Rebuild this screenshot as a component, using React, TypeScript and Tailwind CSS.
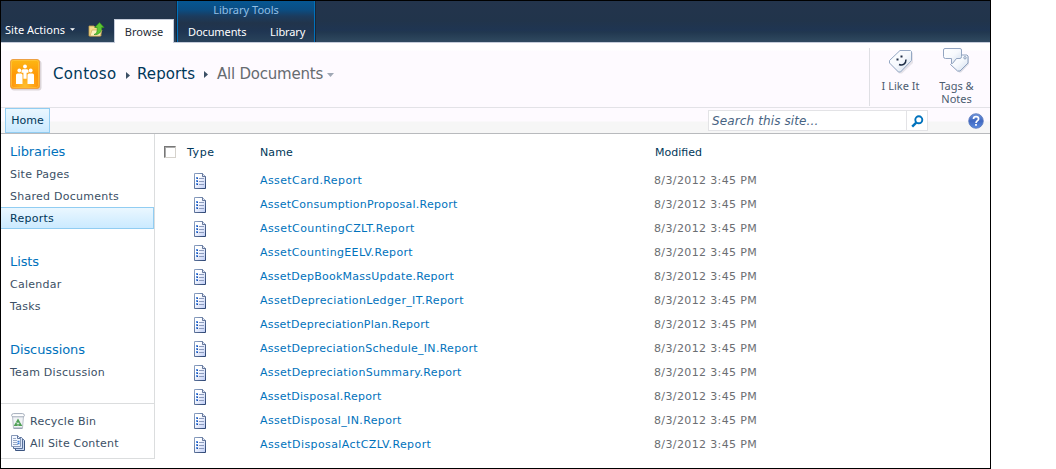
import React from "react";

const reports = [
  { name: "AssetCard.Report", tracking: "tracking-[0.4px]" },
  { name: "AssetConsumptionProposal.Report", tracking: "tracking-[0.26px]" },
  { name: "AssetCountingCZLT.Report", tracking: "tracking-[0.41px]" },
  { name: "AssetCountingEELV.Report", tracking: "tracking-[0.35px]" },
  { name: "AssetDepBookMassUpdate.Report", tracking: "tracking-[0.24px]" },
  { name: "AssetDepreciationLedger_IT.Report", tracking: "tracking-[0.35px]" },
  { name: "AssetDepreciationPlan.Report", tracking: "tracking-[0.21px]" },
  { name: "AssetDepreciationSchedule_IN.Report", tracking: "tracking-[0.29px]" },
  { name: "AssetDepreciationSummary.Report", tracking: "tracking-[0.32px]" },
  { name: "AssetDisposal.Report", tracking: "tracking-[0.25px]" },
  { name: "AssetDisposal_IN.Report", tracking: "tracking-[0.36px]" },
  { name: "AssetDisposalActCZLV.Report", tracking: "tracking-[0.4px]" },
];

const groups = [
  { title: "Libraries", items: ["Site Pages", "Shared Documents", "Reports"] },
  { title: "Lists", items: ["Calendar", "Tasks"] },
  { title: "Discussions", items: ["Team Discussion"] },
];

function ReportIcon() {
  return (
    <svg width="12" height="16" viewBox="0 0 12 16" className="block">
      <defs>
        <linearGradient id="sheet" x1="0" y1="0" x2="1" y2="1">
          <stop offset="0.3" stopColor="#fff" />
          <stop offset="1" stopColor="#bccbf5" />
        </linearGradient>
        <linearGradient id="sheetEdge" x1="0" y1="0" x2="1" y2="1">
          <stop offset="0" stopColor="#8fa3c4" />
          <stop offset="1" stopColor="#2c4472" />
        </linearGradient>
      </defs>
      <path d="M.5.5H8.5L11.5 3.5V15.5H.5Z" fill="url(#sheet)" stroke="url(#sheetEdge)" />
      <path d="M8.500.5V3.500H11.500" fill="#dfe7f8" stroke="#465b84" strokeWidth=".8" />
      <path d="M5 5.500h5M5 8.500h5M5 11.500h5" stroke="#8c9bbd" />
      <path d="M2 5h2M2 8h2M2 11h2" stroke="#5b93e6" strokeWidth="2" />
      <path d="M3 5.500h1M3 8.500h1M3 11.500h1" stroke="#1f4aa0" />
    </svg>
  );
}

function FolderUpIcon() {
  return (
    <svg width="17" height="16" viewBox="0 0 17 16" className="block">
      <path d="M1 4H6L7 5.500H13V14H1Z" fill="#f6d98a" stroke="#c39f4e" strokeWidth=".8" />
      <path d="M2 14L4 8H14L12 14Z" fill="#fdf0bd" stroke="#cfae5b" strokeWidth=".7" />
      <path d="M6 12.500C9 12 9.500 9 9.200 5.500H6.800L11.500 .6L16 5.500H13.700C14 10 10.500 13.300 6 12.500Z" fill="#5fc733" stroke="#2f941d" strokeWidth=".7" />
    </svg>
  );
}

function SiteLogo() {
  return (
    <svg width="32" height="32" viewBox="0 0 32 32" className="block">
      <defs>
        <linearGradient id="tile" x1="0" y1="0" x2="0" y2="1">
          <stop offset="0" stopColor="#fdb813" />
          <stop offset=".55" stopColor="#ff9708" />
          <stop offset="1" stopColor="#ff8a05" />
        </linearGradient>
        <radialGradient id="glow" cx=".5" cy=".95" r=".6">
          <stop offset="0" stopColor="#ffe14a" stopOpacity=".6" />
          <stop offset="1" stopColor="#ffe14a" stopOpacity="0" />
        </radialGradient>
      </defs>
      <rect x="1" y="1.500" width="30.500" height="30" rx="3" fill="#dcd5da" />
      <rect x=".5" y=".5" width="29" height="29" rx="2.500" fill="url(#tile)" stroke="#eda044" />
      <rect x="1.500" y="1.500" width="27" height="27" rx="2" fill="url(#glow)" stroke="#ffc840" strokeOpacity=".7" />
      <g fill="#fff">
        <circle cx="9.300" cy="11.500" r="1.900" />
        <circle cx="15" cy="7.500" r="1.900" />
        <circle cx="20.700" cy="11.500" r="1.900" />
        <path d="M7.500 14.500h3.500q1.500 0 1.500 1.500V25h-6.500v-9q0-1.500 1.500-1.500Z" />
        <path d="M19 14.500h3.500q1.500 0 1.500 1.500V25h-6.500v-9q0-1.500 1.500-1.500Z" />
        <path d="M13 10.300h4q1.500 0 1.500 1.500v2h-1.900v6h-3.200v-6h-1.900v-2q0-1.500 1.500-1.500Z" />
      </g>
    </svg>
  );
}

function LikeIcon() {
  return (
    <svg width="26" height="26" viewBox="0 0 26 26" className="block">
      <defs>
        <linearGradient id="tag" x1="0" y1="0" x2="1" y2="1">
          <stop offset="0" stopColor="#fff" />
          <stop offset=".5" stopColor="#f6f9fd" />
          <stop offset="1" stopColor="#cfdcec" />
        </linearGradient>
      </defs>
      <path d="M13 3.500H23L25 5V15L14 25.500H11L3 17V13Z" fill="#e6e3ea" />
      <path d="M12 2.500H22.500L23.500 3.500V12.500L12.500 24H10.500L1.500 15V12.500Z" fill="url(#tag)" stroke="#95a8c4" />
      <path d="M8.500 11.500h2M12.500 8.500h2" stroke="#1e2d46" strokeWidth="1.800" />
      <path d="M11 16.500c4 1.500 7-1 7-5" fill="none" stroke="#1e2d46" strokeWidth="1.500" />
    </svg>
  );
}

function TagsIcon() {
  return (
    <svg width="27" height="25" viewBox="0 0 27 25" className="block">
      <path d="M12 16.500L18 8H25L26 9V16L18 24.500H16L10.500 19Z" fill="#dadbe4" />
      <path d="M7.500 16.500L10 14L17 7H24L25 8V15L17 23H14.500Z" fill="url(#tag)" stroke="#8da1bf" />
      <circle cx="22" cy="9.800" r="1.200" fill="#fff" stroke="#6f87ab" strokeWidth=".8" />
      <path d="M2 .5H17Q18.500.5 18.500 2V8.500Q18.500 10.500 17 10.500H13.500L9.500 15.500H8.500V10.500H2.500Q.5 10.500.5 8.500V2Q.5.5 2 .5Z" fill="url(#tag)" stroke="#93a5c1" />
    </svg>
  );
}

function SearchIcon() {
  return (
    <svg width="13" height="13" viewBox="0 0 13 13" className="block">
      <circle cx="7.800" cy="4.800" r="3.500" fill="#fff" stroke="#0072bc" strokeWidth="1.900" />
      <path d="M5.200 7.600L1.200 11.600" stroke="#0072bc" strokeWidth="2.400" />
    </svg>
  );
}

function HelpIcon() {
  return (
    <svg width="16" height="16" viewBox="0 0 16 16" className="block">
      <defs>
        <linearGradient id="help" x1="0" y1="0" x2="0" y2="1">
          <stop offset="0" stopColor="#7295db" />
          <stop offset=".5" stopColor="#3f68c1" />
          <stop offset="1" stopColor="#5c8ce0" />
        </linearGradient>
      </defs>
      <circle cx="8" cy="8" r="7.300" fill="url(#help)" stroke="#5877bb" strokeWidth=".8" />
      <path d="M5.500 6C5.500 2.900 10.600 3 10.600 5.900C10.600 7.600 8 7.800 8 10" fill="none" stroke="#fff" strokeWidth="1.700" />
      <path d="M7.100 11h1.800v1.700H7.100Z" fill="#fff" />
    </svg>
  );
}

function RecycleIcon() {
  return (
    <svg width="14" height="16" viewBox="0 0 14 16" className="block">
      <path d="M1.500 3L2.500 15H11.500L12.500 3Z" fill="#f1f3f6" stroke="#b9c0ca" />
      <path d="M.6 2.500Q.7.6 2.500.6H11.500Q13.300.6 13.400 2.500L12.600 3.800H1.400Z" fill="#fff" stroke="#98a3b2" strokeWidth=".9" />
      <path d="M2.500 15.300h9" stroke="#8b96a8" />
      <path d="M7 5.500L11.300 13H2.700Z" fill="#4e9f55" />
      <path d="M7 9L8.300 11.300H5.700Z" fill="#f1f3f6" />
      <path d="M4.300 9.300L6 10M9.800 9L8.500 10.200M7 12v1" stroke="#d8ead9" strokeWidth=".7" />
    </svg>
  );
}

function ContentIcon() {
  return (
    <svg width="15" height="16" viewBox="0 0 15 16" className="block">
      <path d="M4.500 4.500H12.500L13.500 5.500V15.500H4.500Z" fill="#c7d7f2" stroke="#3c5580" />
      <path d="M2.500 2.500H10.500L11.500 3.500V13.500H2.500Z" fill="#dce7fa" stroke="#58709a" />
      <path d="M.5.5H6.500L9.500 3.500V11.500H.5Z" fill="#f4f8ff" stroke="#8799b8" />
      <path d="M6.500.5V3.500H9.500" fill="none" stroke="#60779f" />
      <path d="M2 3.500h3M2 5.500h4M2 7.500h4M2 9.500h5" stroke="#9aaac6" />
      <path d="M6.500 6.500h2M6.500 8.500h2" stroke="#3c7edb" strokeWidth="1.500" />
    </svg>
  );
}

function Ribbon() {
  return (
    <header className="flex h-[42px] shrink-0 border-b border-[#c5ccda] bg-[linear-gradient(#23344c_0px,#21344b_20px,#1f3552_29px,#21374f_31px,#304a60_41px)] font-['Noto_Sans',sans-serif] text-[11px] text-white">
      <div className="flex w-[113px] items-end pb-[4px] pl-1">
        <span className="h-[17px] w-[60px] whitespace-nowrap leading-[17px] tracking-[0.02px]">Site Actions</span>
        <svg width="5" height="3" viewBox="0 0 6 3" className="mb-[7px] ml-[5px]"><path d="M0 0h6L3 3Z" fill="#fff" /></svg>
        <div className="ml-[13px]"><FolderUpIcon /></div>
      </div>
      <div className="-mb-px mt-[18px] flex w-[60px] justify-center border border-b-0 border-[#c5ccda] bg-white pt-[3px] leading-[17px] text-[#262b36]">
        <span className="tracking-[0.1px]">Browse</span>
      </div>
      <div className="ml-[2px] flex w-[140px] border-x border-[#192436]">
        <div className="flex flex-1 flex-col border-x border-[#0072bc] bg-[linear-gradient(#055692_0px,#0b4d82_9px,#1b3c5f_15px,#21344b_22px,#1f3552_30px,#29435b_41px)]">
          <div className="h-[21px] text-center leading-[18px] text-[#92bfe5]">Library Tools</div>
          <div className="flex whitespace-nowrap pl-[10px] leading-[20px]">
            <span className="w-[82px] tracking-[-0.1px]">Documents</span>
            <span className="tracking-[-0.1px]">Library</span>
          </div>
        </div>
      </div>
    </header>
  );
}

function TitleBar() {
  return (
    <div className="flex h-[65px] shrink-0 border-b border-[#e3e2e7] bg-[linear-gradient(#fff_7px,#fefaff_8px)] pl-[9px]">
      <div className="pt-[16px]"><SiteLogo /></div>
      <div className="ml-[11px] mt-[15px] flex h-8 flex-1 items-center whitespace-nowrap text-[15px] text-[#003759]">
        <span className="w-[73px] tracking-[0.33px]">Contoso</span>
        <svg width="4" height="7" viewBox="0 0 4 7" className="mt-[3px]"><path d="M0 0L4 3.500L0 7Z" fill="#3b4f65" /></svg>
        <span className="ml-[7px] w-[67px] tracking-[0.1px]">Reports</span>
        <svg width="4" height="7" viewBox="0 0 4 7"><path d="M0 0L4 3.500L0 7Z" fill="#3b4f65" /></svg>
        <span className="ml-[9px] w-[110px] tracking-[-0.22px] text-[#666b70]">All Documents</span>
        <svg width="7" height="4" viewBox="0 0 7 4" className="mt-[2px]"><path d="M0 0h7L3.500 4Z" fill="#a0a8b5" /></svg>
      </div>
      <div className="mt-[5px] flex h-[58px] w-[121px] border-l border-[#dfdfe4] font-['Noto_Sans',sans-serif] text-[11px] leading-[13px] text-[#4c5c70]">
        <div className="flex w-[61px] flex-col items-center">
          <div className="h-[31px]"><LikeIcon /></div>
          <span className="whitespace-nowrap">I Like It</span>
        </div>
        <div className="flex w-[51px] flex-col items-center">
          <div className="h-[31px]"><TagsIcon /></div>
          <span>Tags &amp;</span>
          <span>Notes</span>
        </div>
      </div>
    </div>
  );
}

function NavBar() {
  return (
    <div className="flex h-[26px] shrink-0 border-b border-[#b8babd] bg-[linear-gradient(#fefaff_13px,#f6f6f6_14px)] pl-1">
      <div className="flex h-[25px] w-[45px] items-center justify-center border border-[#91cdf2] bg-[linear-gradient(#eaf7ff,#cbeaff)] pt-[2px] text-[11px] text-[#003759]">
        <span>Home</span>
      </div>
      <div className="ml-auto mt-[2px] flex h-[21px] w-[220px] border border-[#e3e3e6] bg-white">
        <span className="flex-1 whitespace-nowrap pl-[3px] pt-px text-[12px] italic leading-[19px] tracking-[0.12px] text-[#476382]">Search this site...</span>
        <div className="flex w-[21px] items-center justify-center border-l border-[#e3e3e6] pt-px"><SearchIcon /></div>
      </div>
      <div className="ml-[40px] mr-[6px] mt-[5px]"><HelpIcon /></div>
    </div>
  );
}

function Sidebar() {
  return (
    <nav className="flex h-[325px] w-[154px] shrink-0 flex-col border-b border-r border-[#dbddde] pt-[7px] text-[11px] tracking-[0.26px] text-[#3b4f65]">
      {groups.map((group) => (
        <section key={group.title} className="mb-[22px]">
          <h2 className="h-[22px] pl-[9px] text-[13px] leading-[22px] tracking-[-0.1px] text-[#0072bc]">{group.title}</h2>
          {group.items.map((item) => (
            <div
              key={item}
              className={
                item === "Reports"
                  ? "h-[22px] border border-l-0 border-[#91cdf2] bg-[linear-gradient(#eaf7ff,#cbeaff)] pl-[9px] leading-[22px] text-[#003759]"
                  : "h-[22px] pl-[9px] leading-[24px]"
              }
            >
              {item}
            </div>
          ))}
        </section>
      ))}
      <div className="mt-[-2px] flex flex-1 flex-col border-t border-[#dbddde] pt-[6px]">
        <div className="flex h-[22px] items-center pl-[10px]">
          <RecycleIcon /><span className="ml-[5px] pt-[2px]">Recycle Bin</span>
        </div>
        <div className="flex h-[22px] items-center pl-[10px]">
          <ContentIcon /><span className="ml-[4px] pt-[2px] tracking-[0.2px]">All Site Content</span>
        </div>
      </div>
    </nav>
  );
}

function DocumentList() {
  return (
    <main className="flex-1 pl-[9px] pt-[6px] text-[11px]">
      <div className="flex h-[28px] items-center pb-[4px] text-[#003759]">
        <div className="mr-[11px] h-[12px] w-[12px] border border-b-[#d5d2cc] border-l-[#777] border-r-[#d5d2cc] border-t-[#777] bg-white shadow-[inset_1px_1px_0_#aaa]" />
        <span className="w-[73px] pt-[2px] tracking-[0.6px]">Type</span>
        <span className="w-[395px] pt-[2px] tracking-[0.1px]">Name</span>
        <span className="pt-[2px]">Modified</span>
      </div>
      {reports.map((report) => (
        <div key={report.name} className="flex h-[24px]">
          <div className="w-[96px] pl-[30px] pt-[5px]"><ReportIcon /></div>
          <span className={`w-[394px] leading-[26px] text-[#0072bc] ${report.tracking}`}>{report.name}</span>
          <span className="leading-[26px] tracking-[0.37px] text-[#6b6e72]">8/3/2012 3:45 PM</span>
        </div>
      ))}
    </main>
  );
}

export default function App() {
  return (
    <div className="h-[469px] w-full overflow-hidden bg-white font-['DejaVu_Sans',sans-serif]">
      <div className="flex h-[469px] w-[991px] flex-col border border-black">
        <Ribbon />
        <TitleBar />
        <NavBar />
        <div className="flex min-h-0 flex-1">
          <Sidebar />
          <DocumentList />
        </div>
      </div>
    </div>
  );
}
